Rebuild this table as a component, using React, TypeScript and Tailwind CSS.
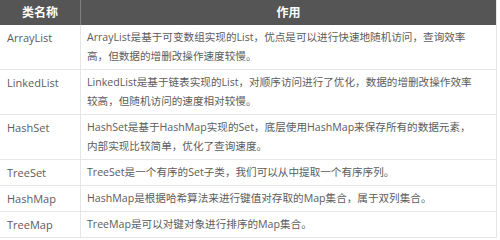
import React from "react";

const rows: { name: string; lines: string[] }[] = [
  {
    name: "ArrayList",
    lines: [
      "ArrayList是基于可变数组实现的List，优点是可以进行快速地随机访问，查询效率",
      "高，但数据的增删改操作速度较慢。",
    ],
  },
  {
    name: "LinkedList",
    lines: [
      "LinkedList是基于链表实现的List，对顺序访问进行了优化，数据的增删改操作效率",
      "较高，但随机访问的速度相对较慢。",
    ],
  },
  {
    name: "HashSet",
    lines: [
      "HashSet是基于HashMap实现的Set，底层使用HashMap来保存所有的数据元素，",
      "内部实现比较简单，优化了查询速度。",
    ],
  },
  { name: "TreeSet", lines: ["TreeSet是一个有序的Set子类，我们可以从中提取一个有序序列。"] },
  { name: "HashMap", lines: ["HashMap是根据哈希算法来进行键值对存取的Map集合，属于双列集合。"] },
  { name: "TreeMap", lines: ["TreeMap是可以对键对象进行排序的Map集合。"] },
];

export default function App() {
  return (
    <div
      className="w-[500px] h-[240px] bg-white overflow-hidden text-[10.6px] text-[#5c5c5c]"
      style={{ fontFamily: '"Open Sans", "Noto Sans CJK SC", sans-serif' }}
    >
      <div className="w-[497px] border-r border-b border-[#e6e6e6]">
        <div className="grid grid-cols-[81px_1fr] h-[25px] bg-[#555555] text-white font-bold text-[12px]">
          <div className="flex items-center justify-center border-r border-[#808080]">类名称</div>
          <div className="flex items-center justify-center">作用</div>
        </div>
        {rows.map((r, i) => (
          <div
            key={r.name}
            className={`grid grid-cols-[81px_1fr] leading-[19px] ${i > 0 ? "border-t border-[#e6e6e6]" : ""}`}
          >
            <div className="px-[7px] py-[3px] border-r border-[#e6e6e6] whitespace-nowrap text-[11px]">{r.name}</div>
            <div className="px-[6px] py-[3px] whitespace-nowrap">
              {r.lines.map((l, j) => (
                <div key={j}>{l}</div>
              ))}
            </div>
          </div>
        ))}
      </div>
    </div>
  );
}
